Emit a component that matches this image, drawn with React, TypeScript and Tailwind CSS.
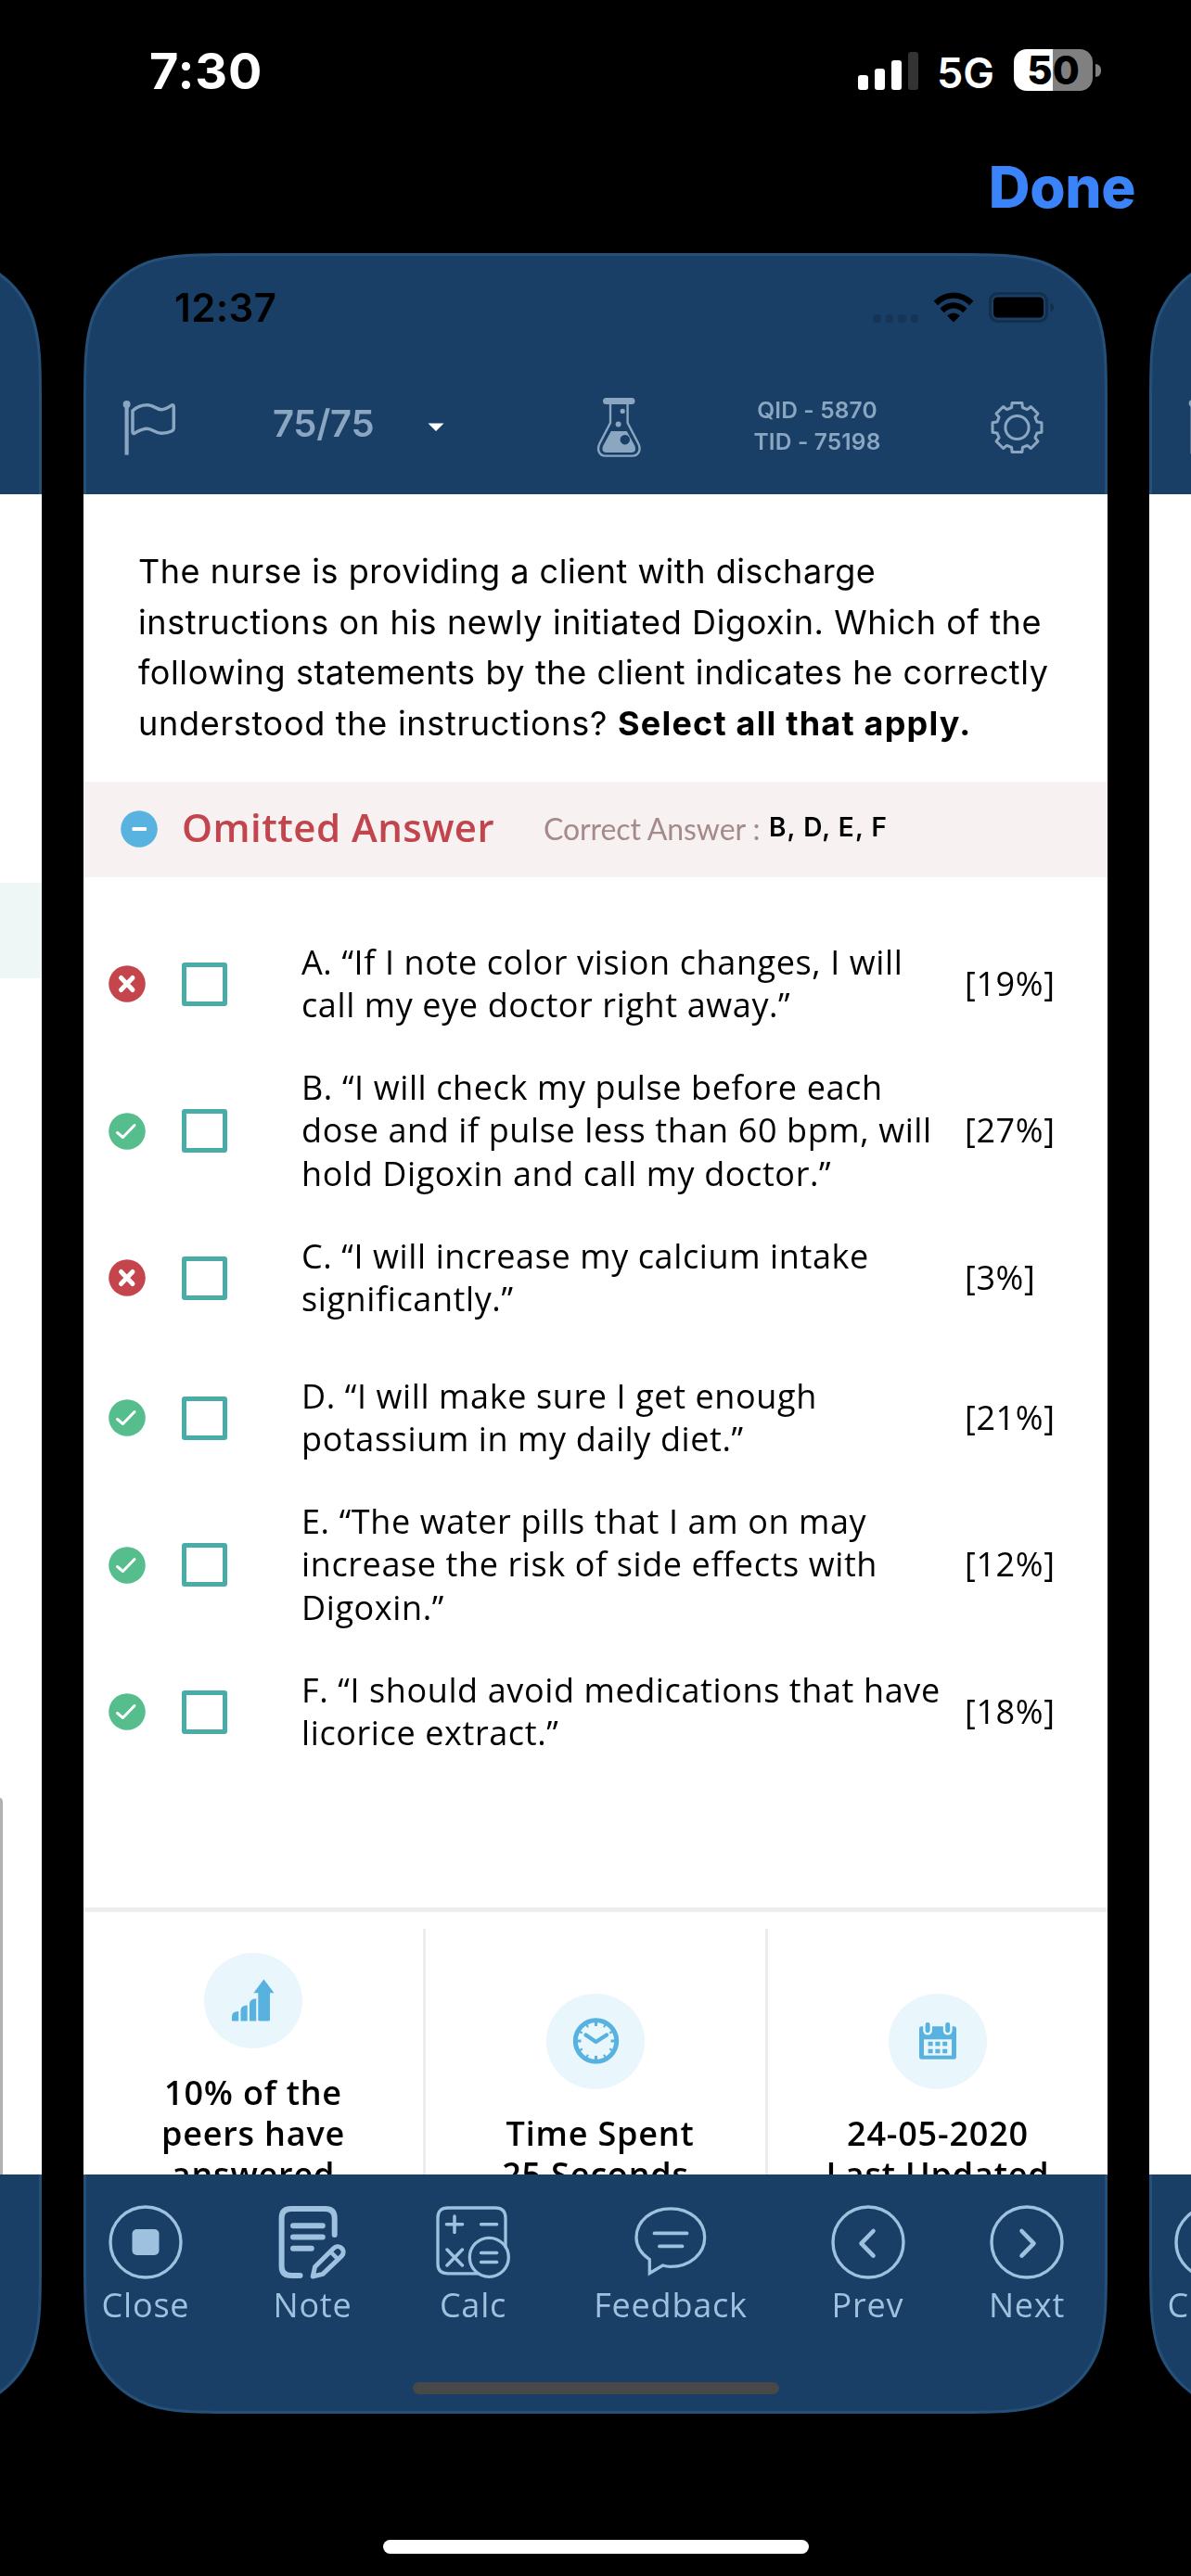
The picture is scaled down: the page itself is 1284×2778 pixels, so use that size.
import type { ReactNode } from "react";

const CARD_W = 1104;
const CARD_H = 2330;

/* Rounded rectangle with continuous-curvature corners. */
function continuousCorners(w: number, h: number, r: number, o = 0): string {
  const x0 = o;
  const y0 = o;
  const x1 = w - o;
  const y1 = h - o;
  const [a, b, c, d, e, f, g] = [1.528665, 1.088493, 0.868407, 0.631494, 0.372824, 0.16906, 0.074911].map((k) => k * r);
  return [
    `M${x0 + a} ${y0}H${x1 - a}`,
    `C${x1 - b} ${y0} ${x1 - c} ${y0} ${x1 - d} ${y0 + g}`,
    `C${x1 - e} ${y0 + f} ${x1 - f} ${y0 + e} ${x1 - g} ${y0 + d}`,
    `C${x1} ${y0 + c} ${x1} ${y0 + b} ${x1} ${y0 + a}V${y1 - a}`,
    `C${x1} ${y1 - b} ${x1} ${y1 - c} ${x1 - g} ${y1 - d}`,
    `C${x1 - f} ${y1 - e} ${x1 - e} ${y1 - f} ${x1 - d} ${y1 - g}`,
    `C${x1 - c} ${y1} ${x1 - b} ${y1} ${x1 - a} ${y1}H${x0 + a}`,
    `C${x0 + b} ${y1} ${x0 + c} ${y1} ${x0 + d} ${y1 - g}`,
    `C${x0 + e} ${y1 - f} ${x0 + f} ${y1 - e} ${x0 + g} ${y1 - d}`,
    `C${x0} ${y1 - c} ${x0} ${y1 - b} ${x0} ${y1 - a}V${y0 + a}`,
    `C${x0} ${y0 + b} ${x0} ${y0 + c} ${x0 + g} ${y0 + d}`,
    `C${x0 + f} ${y0 + e} ${x0 + e} ${y0 + f} ${x0 + d} ${y0 + g}`,
    `C${x0 + c} ${y0} ${x0 + b} ${y0} ${x0 + a} ${y0}Z`,
  ].join("");
}

const cardShape = continuousCorners(CARD_W, CARD_H, 110);
const cardRim = continuousCorners(CARD_W, CARD_H, 109, 1.5);

function gearPath(cx: number, cy: number): string {
  const pts: string[] = [];
  for (let i = 0; i < 8; i++) {
    const a = (i * Math.PI) / 4 - Math.PI / 2;
    const spots: [number, number][] = [
      [22.3, -0.27],
      [27, -0.2],
      [27, 0.2],
      [22.3, 0.27],
    ];
    for (const [r, d] of spots) pts.push(`${(cx + r * Math.cos(a + d)).toFixed(2)} ${(cy + r * Math.sin(a + d)).toFixed(2)}`);
  }
  return `M${pts.join("L")}Z`;
}

function FlagIcon() {
  return (
    <svg width="58" height="60" viewBox="0 0 58 60" fill="none">
      <circle cx="4.6" cy="5" r="4" fill="currentColor" />
      <path d="M4.6 5V59.6" stroke="currentColor" strokeWidth="4.2" />
      <path
        d="M11 12C16 7 22 5.7 27 5.7C33 5.7 37 10.7 42 10.7C47 10.7 50 8 53 6Q55.3 5 55.3 8V31Q55 33 53 34C49 36 46 36.3 42 36.3C36 36.3 32 31.3 26.5 31.3C21 31.3 17 34 13 36.3Q11 37 11 34.5Z"
        stroke="currentColor"
        strokeWidth="3.5"
        strokeLinejoin="round"
      />
    </svg>
  );
}

function FlaskIcon() {
  return (
    <svg width="49" height="66" viewBox="0 0 49 66" fill="none">
      <rect x="7" y="1" width="34.5" height="7" rx="3.5" fill="currentColor" />
      <path
        d="M15 7V28L3.6 50C0 57 3 63.6 10 63.6H38.5C45.5 63.6 48.6 57 45 50L33.6 28V7"
        stroke="currentColor"
        strokeWidth="2.4"
      />
      <path
        fillRule="evenodd"
        d="M15.8 37H32.8L41.5 53Q43.6 60 38 60H10.5Q4.8 60 7 53ZM30.8 41a5.2 5.2 0 1 0 .01 0Z"
        fill="currentColor"
      />
      <circle cx="23.6" cy="29.4" r="3" fill="currentColor" />
      <circle cx="28.2" cy="15.4" r="2.6" fill="currentColor" />
    </svg>
  );
}

function GearIcon() {
  return (
    <svg width="59" height="58" viewBox="0 0 59 58" fill="none" stroke="currentColor" strokeWidth="3" strokeLinejoin="round">
      <path d={gearPath(29.5, 29)} />
      <circle cx="29.5" cy="29" r="12.6" />
    </svg>
  );
}

function WifiIcon() {
  return (
    <svg width="44" height="33" viewBox="0 0 44 33" fill="none" stroke="#000" strokeWidth="6.4">
      <path d="M2.8 11.8Q11.5 3.6 22 3.6T41.2 11.8" />
      <path d="M9.6 19.8Q15.5 14.4 22 14.4T34.4 19.8" />
      <path d="M22 32.5L15 25.4Q22 19.8 29 25.4Z" fill="#000" stroke="none" />
    </svg>
  );
}

function InnerBattery() {
  return (
    <svg width="71" height="34" viewBox="0 0 71 34">
      <rect x="1.5" y="1.5" width="61" height="30" rx="8" fill="none" stroke="#122f4b" strokeWidth="3" />
      <rect x="5" y="5.5" width="54" height="22" rx="4.5" fill="#000" />
      <path d="M66.5 11.5Q70 13 70 16.5T66.5 21.5Z" fill="#122f4b" />
    </svg>
  );
}

function GrowthIcon() {
  return (
    <svg width="46" height="46" viewBox="0 0 46 46" fill="#58b2df">
      <path d="M0 41Q0 35.4 7.2 35V45.6H0Z" />
      <path d="M9.5 34Q9.5 29 16.7 28.6V45.6H9.5Z" />
      <path d="M19 27Q19 21.8 26.2 21.3V45.6H19Z" />
      <path d="M34.4.6L45.5 15.2H41V44Q41 45.6 39.4 45.6H30Q28.3 45.6 28.3 44V15.2H23.4Z" />
    </svg>
  );
}

function ClockIcon() {
  return (
    <svg width="51" height="50" viewBox="0 0 51 50" fill="none" stroke="#58b2df">
      <circle cx="25.5" cy="25" r="22.2" strokeWidth="5" />
      {Array.from({ length: 12 }, (_, i) => (
        <path
          key={i}
          d={i % 3 === 0 ? "M25.5 4V9" : "M25.5 4V8"}
          strokeWidth={i % 3 === 0 ? 3 : 2.2}
          transform={`rotate(${i * 30} 25.5 25)`}
        />
      ))}
      <path d="M14.5 18.5L25.5 26L37 18.5" strokeWidth="4.4" strokeLinecap="round" strokeLinejoin="round" />
    </svg>
  );
}

function CalendarIcon() {
  return (
    <svg width="40" height="40" viewBox="0 0 40 40" fill="#58b2df">
      <rect x="0" y="4.3" width="40" height="35.4" rx="2.6" />
      <g stroke="#e9f6fb" strokeWidth="2.4">
        <rect x="5.4" y="-1.2" width="7.4" height="13.6" rx="3.6" />
        <rect x="27" y="-1.2" width="7.4" height="13.6" rx="3.6" />
      </g>
      <rect x="5" y="18.3" width="30" height="17.4" fill="#e9f6fb" />
      {[9.6, 17.4, 25.2].map((x) => [20.8, 28.7].map((y) => <rect key={`${x}-${y}`} x={x} y={y} width="5" height="4.6" />))}
    </svg>
  );
}

function CloseIcon() {
  return (
    <svg width="80" height="80" viewBox="0 0 80 80" fill="none">
      <circle cx="40" cy="40" r="38" stroke="currentColor" strokeWidth="3.4" />
      <rect x="25.5" y="26" width="29" height="28" rx="5" fill="currentColor" />
    </svg>
  );
}

function NoteIcon() {
  return (
    <svg width="74" height="80" viewBox="0 0 74 80" fill="none" stroke="currentColor" strokeLinecap="round" strokeLinejoin="round">
      <path d="M60.7 32V14Q60.7 4 50.5 4H14Q3.6 4 3.6 14V66Q3.6 76 14 76H23.5" strokeWidth="6" />
      <path d="M16 22.2H47.8M16 34.4H47.8M16 46.7H35.8" strokeWidth="6" />
      <path d="M37.2 77L39.6 66.5L60 46.3C65.5 41.5 73.5 48.5 68.6 54.6L48 74.4Z" strokeWidth="5" />
      <path d="M57 51L64.5 58.5" strokeWidth="4.5" />
    </svg>
  );
}

function CalcIcon() {
  return (
    <svg width="80" height="80" viewBox="0 0 80 80" fill="none" stroke="currentColor" strokeWidth="3.3" strokeLinecap="round">
      <path d="M75 46V14Q75 3 64 3H13Q2 3 2 13.5V63.5Q2 73.8 13 73.8H46" strokeLinecap="butt" />
      <circle cx="57.3" cy="56.3" r="21" />
      <path d="M20 12V29.4M11.4 20.7H28.6M48.6 20.7H65.6M12 48L28.4 65M28.4 48L12 65M48.6 51.4H65.6M48.6 61.4H65.6" strokeWidth="3.5" />
    </svg>
  );
}

function FeedbackIcon() {
  return (
    <svg width="78" height="80" viewBox="0 0 78 80" fill="none" stroke="currentColor" strokeWidth="3.3" strokeLinecap="round">
      <path d="M30.5 65C33.5 66 36 66.3 39 66.3C60 66.3 75.7 52.5 75.7 35S60 3.8 39 3.8S2 17.5 2 35C2 44.5 8 53 16.3 58.7V73.5Z" />
      <path d="M21.5 30.4H56.5M27 44.4H51.5" strokeWidth="3.9" />
    </svg>
  );
}

function ArrowCircle({ dir }: { dir: "left" | "right" }) {
  return (
    <svg width="80" height="80" viewBox="0 0 80 80" fill="none" stroke="currentColor" strokeWidth="3.4">
      <circle cx="40" cy="40" r="38" />
      <path
        d={dir === "left" ? "M45.5 28L32.5 41.3L45.5 54.6" : "M34.5 28L47.5 41.3L34.5 54.6"}
        strokeWidth="4.6"
        strokeLinecap="round"
        strokeLinejoin="round"
      />
    </svg>
  );
}

function Card({ header, toolbar, children }: { header?: ReactNode; toolbar?: ReactNode; children?: ReactNode }) {
  return (
    <div className="relative flex h-[2330px] w-[1104px] shrink-0 flex-col bg-white" style={{ clipPath: `path('${cardShape}')` }}>
      <div className="h-[260px] shrink-0 bg-[#1a3f66]">{header}</div>
      <div className="min-h-0 flex-1 overflow-hidden">{children}</div>
      <div className="h-[258px] shrink-0 bg-[#1a3f66]">{toolbar}</div>
      <svg className="pointer-events-none absolute inset-0 mix-blend-screen" width={CARD_W} height={CARD_H} fill="none">
        <path d={cardRim} stroke="#0c161e" strokeWidth="3" />
      </svg>
    </div>
  );
}

function MainHeader() {
  return (
    <div className="font-['Inter',sans-serif]">
      <div className="flex h-[117px] items-center pl-[98px] text-[42px] leading-none font-semibold tracking-[0.4px] text-black">
        12:37
        <span className="mt-[24px] ml-auto flex gap-[5px]">
          {[0, 1, 2, 3].map((i) => (
            <span key={i} className="h-[9px] w-[8.5px] rounded-[3px] bg-[#163556]" />
          ))}
        </span>
        <span className="ml-[16px]">
          <WifiIcon />
        </span>
        <span className="mr-[57px] ml-[16px]">
          <InnerBattery />
        </span>
      </div>
      <div className="flex h-[143px] items-center pb-[2px] text-[#8aa6c0]">
        <span className="ml-[42px] w-[58px]">
          <FlagIcon />
        </span>
        <span className="mb-[7px] ml-[104px] w-[167px] text-[40px] leading-none font-semibold tracking-[-0.3px]">75/75</span>
        <svg width="18" height="9" viewBox="0 0 18 9">
          <path d="M.5 .5H17.5L9 9Z" fill="#fff" />
        </svg>
        <span className="ml-[164px] w-[49px]">
          <FlaskIcon />
        </span>
        <span className="mb-[3px] ml-[99px] w-[180px] text-center text-[24.5px] leading-[34px] font-semibold tracking-[0.15px]">
          QID - 5870
          <br />
          TID - 75198
        </span>
        <span className="ml-[96px]">
          <GearIcon />
        </span>
      </div>
    </div>
  );
}

function Tool({ icon, label, className }: { icon: ReactNode; label: string; className: string }) {
  return (
    <div className={`flex shrink-0 flex-col items-center ${className}`}>
      {icon}
      <span className="mt-[5.5px] text-[36px] leading-[44px] tracking-[0.8px]">{label}</span>
    </div>
  );
}

function MainToolbar() {
  return (
    <div className="flex flex-col items-center font-['Open_Sans',sans-serif] text-[#9dc1de]">
      <div className="flex w-full gap-[73px] pt-[33px] pl-[10px]">
        <Tool icon={<CloseIcon />} label="Close" className="w-[114px]" />
        <Tool icon={<NoteIcon />} label="Note" className="w-[100px]" />
        <Tool icon={<CalcIcon />} label="Calc" className="w-[100px]" />
        <Tool icon={<FeedbackIcon />} label="Feedback" className="w-[180px]" />
        <Tool icon={<ArrowCircle dir="left" />} label="Prev" className="w-[99px]" />
        <Tool icon={<ArrowCircle dir="right" />} label="Next" className="w-[98px]" />
      </div>
      <div className="mt-[61.5px] h-[13px] w-[395px] rounded-full bg-[#484848]" />
    </div>
  );
}

const answers = [
  { text: "A. “If I note color vision changes, I will call my eye doctor right away.”", pct: "[19%]", ok: false },
  { text: "B. “I will check my pulse before each dose and if pulse less than 60 bpm, will hold Digoxin and call my doctor.”", pct: "[27%]", ok: true },
  { text: "C. “I will increase my calcium intake significantly.”", pct: "[3%]", ok: false },
  { text: "D. “I will make sure I get enough potassium in my daily diet.”", pct: "[21%]", ok: true },
  { text: "E. “The water pills that I am on may increase the risk of side effects with Digoxin.”", pct: "[12%]", ok: true },
  { text: "F. “I should avoid medications that have licorice extract.”", pct: "[18%]", ok: true },
];

function Verdict({ ok }: { ok: boolean }) {
  return (
    <svg width="40" height="40" viewBox="0 0 40 40" fill="none" stroke="#fff" strokeLinecap="round" strokeLinejoin="round">
      <circle cx="20" cy="20" r="19.8" fill={ok ? "#56bd8c" : "#c4454c"} stroke="none" />
      {ok ? <path d="M9.5 21.5L15.5 26.5L28 13.5" strokeWidth="3" /> : <path d="M13.5 13.5L26 26.5M26 13.5L13.5 26.5" strokeWidth="5" />}
    </svg>
  );
}

function Stat({ icon, lines, className }: { icon: ReactNode; lines: ReactNode[]; className: string }) {
  return (
    <div className={`flex flex-1 flex-col items-center border-[#ededef] ${className}`}>
      <div className="flex h-[103px] w-[106px] shrink-0 items-center justify-center rounded-[50%] bg-[#e9f6fb]">{icon}</div>
      <div className="mt-[26px] text-center text-[36px] leading-[44.3px] font-[560] tracking-[0.8px]">
        {lines.map((l, i) => (
          <div key={i}>{l}</div>
        ))}
      </div>
    </div>
  );
}

function Question() {
  return (
    <div className="text-black">
      <div className="pt-[56.2px] pl-[59px] font-['Inter',sans-serif] text-[36px] leading-[54.6px] whitespace-nowrap">
        <div className="tracking-[0.54px]">The nurse is providing a client with discharge</div>
        <div className="tracking-[0.61px]">instructions on his newly initiated Digoxin. Which of the</div>
        <div className="tracking-[0.6px]">following statements by the client indicates he correctly</div>
        <div className="tracking-[0.72px]">
          understood the instructions? <b className="font-bold tracking-[1.2px]">Select all that apply.</b>
        </div>
      </div>

      <div className="mt-[35.3px] flex h-[103px] items-center bg-[#f7f1f1] pl-[40px] whitespace-nowrap">
        <svg width="40" height="40" viewBox="0 0 40 40">
          <circle cx="20" cy="20" r="19.8" fill="#58b3e0" />
          <rect x="12.5" y="18" width="15.5" height="4" rx="1" fill="#fff" />
        </svg>
        <span className="mb-[5px] ml-[26px] w-[390px] font-['Open_Sans',sans-serif] text-[42px] leading-none font-[560] tracking-[0.45px] text-[#c2454d]">
          Omitted Answer
        </span>
        <span className="mb-[1px] w-[243px] font-['Lato',sans-serif] text-[32px] leading-none tracking-[-0.1px] text-[#a58a8b]">
          Correct Answer :
        </span>
        <span className="mb-[5px] font-['Inter',sans-serif] text-[28px] leading-none font-semibold tracking-[1.1px]">B, D, E, F</span>
      </div>

      <div className="pt-[40px] font-['Open_Sans',sans-serif] text-[36px] leading-[46.8px] tracking-[0.61px]">
        {answers.map((a) => (
          <div key={a.pct} className="flex min-h-[151px] items-center py-[12.8px] pl-[27px]">
            <Verdict ok={a.ok} />
            <span className="ml-[39px] h-[47px] w-[49px] rounded-[3px] border-[5.5px] border-[#4aaca6]" />
            <span className="ml-[80px] w-[700px]">{a.text}</span>
            <span className="ml-[15px]">{a.pct}</span>
          </div>
        ))}
      </div>

      <div className="mt-[134.7px] h-[5px] bg-[#ededef]" />
      <div className="mt-[18px] flex h-[400px] font-['Open_Sans',sans-serif]">
        <Stat icon={<GrowthIcon />} lines={["10% of the", "peers have", "answered"]} className="border-r-[3px] pt-[26px]" />
        <Stat
          icon={<ClockIcon />}
          lines={[<span className="pl-[10px]">Time Spent</span>, "25 Seconds"]}
          className="border-r-[3px] pt-[70px]"
        />
        <Stat icon={<CalendarIcon />} lines={["24-05-2020", "Last Updated"]} className="pt-[70px]" />
      </div>
    </div>
  );
}

export default function App() {
  return (
    <div className="flex h-[2778px] w-[1284px] flex-col overflow-hidden bg-black">
      <div className="flex h-[154px] shrink-0 items-center pl-[161px] font-['Inter',sans-serif] leading-none text-white">
        <span className="w-[764px] text-[54px] font-bold tracking-[0.8px]">7:30</span>
        <span className="mt-[-2px] flex h-[41px] items-end gap-[7px]">
          <i className="h-[16px] w-[11px] rounded-[3px] bg-white" />
          <i className="h-[23px] w-[11px] rounded-[3px] bg-white" />
          <i className="h-[32px] w-[11px] rounded-[3px] bg-white" />
          <i className="h-[41px] w-[11px] rounded-[3px] bg-[#333]" />
        </span>
        <span className="mt-[3px] ml-[20px] w-[83px] text-[45px] font-semibold">5G</span>
        <span className="mt-[-3px] flex h-[45px] w-[85px] items-center justify-center rounded-[14px] bg-linear-to-r from-white from-50% to-[#808080] to-50% text-[42px] font-extrabold text-black">
          50
        </span>
        <span className="mt-[-3px] ml-[3px] h-[14px] w-[6px] rounded-r-full bg-[#808080]" />
      </div>
      <div className="flex h-[119px] shrink-0 justify-end pt-[16px] pr-[60px] font-['Inter',sans-serif] text-[62px] leading-[64px] font-extrabold tracking-[-0.4px] text-[#3a83f9]">
        Done
      </div>

      <div className="-ml-[1059px] flex shrink-0 gap-[45px]">
        <Card>
          <div className="mt-[419px] h-[103px] bg-[#eef7f6]" />
          <div className="mt-[883px] mr-[42px] ml-auto h-[420px] w-[10px] rounded-tr-[5px] bg-[#b1b1b1]" />
        </Card>
        <Card header={<MainHeader />} toolbar={<MainToolbar />}>
          <Question />
        </Card>
        <Card
          header={
            <div className="pt-[157px] pl-[42px] text-[#8aa6c0]">
              <FlagIcon />
            </div>
          }
          toolbar={
            <div className="pt-[33px] pl-[10px] font-['Open_Sans',sans-serif] text-[#9dc1de]">
              <Tool icon={<CloseIcon />} label="Close" className="w-[114px]" />
            </div>
          }
        />
      </div>

      <div className="mt-[136px] h-[15px] w-[459px] shrink-0 self-center rounded-full bg-white" />
    </div>
  );
}
